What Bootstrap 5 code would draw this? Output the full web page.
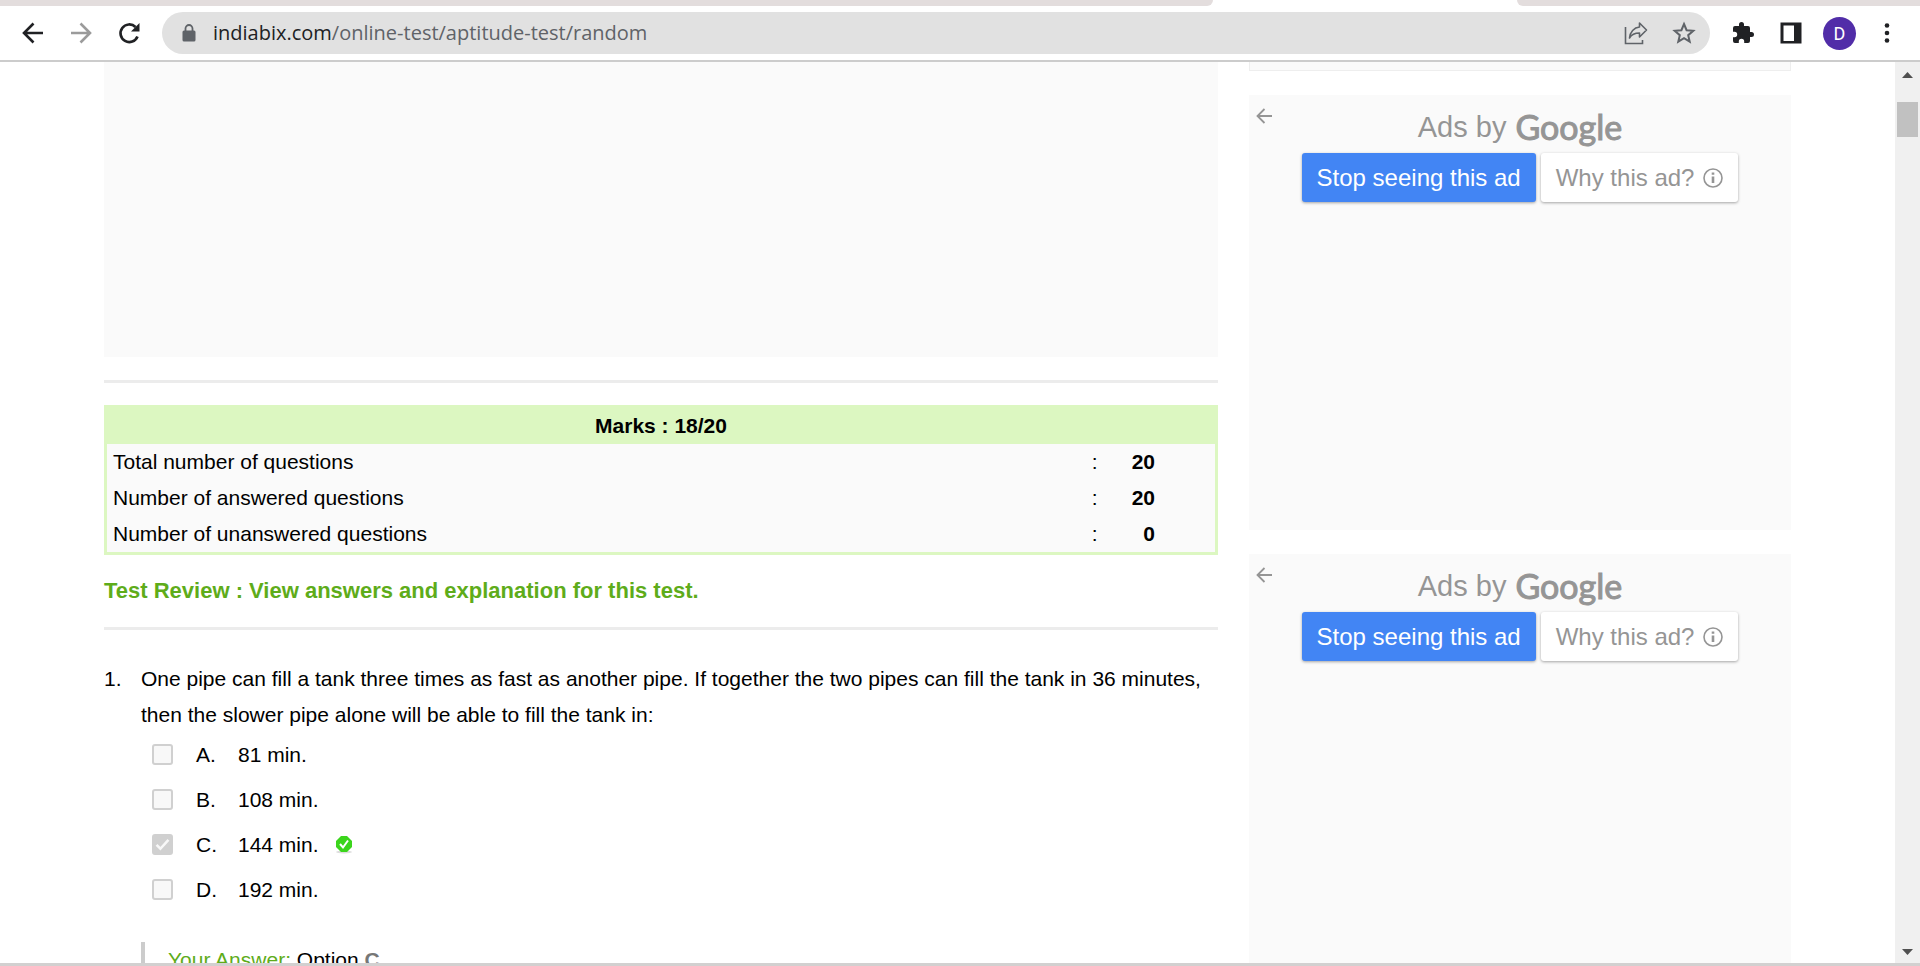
<!DOCTYPE html>
<html lang="en">
<head>
<meta charset="utf-8">
<meta name="viewport" content="width=device-width, initial-scale=1">
<title>Aptitude Test - Random</title>
<link href="https://cdn.jsdelivr.net/npm/bootstrap@5.3.0/dist/css/bootstrap.min.css" rel="stylesheet">
<style>
body { font-family: "Liberation Sans", Arial, sans-serif; font-size: 21px; line-height: 36px; color: #000; background: #fff; }
.tabstrip { height: 6px; }
.tabstrip div { background: #e3dddd; }
.tab-before { width: 63.2%; border-bottom-right-radius: 6px; }
.tab-after { width: 21%; border-bottom-left-radius: 6px; }
.toolbar { height: 56px; border-bottom: 2px solid #ccc; padding: 0 30px 0 18px; }
.icon-btn { border: 0; background: none; padding: 0; line-height: 0; }
.nav-icons { width: 144px; gap: 18px; }
.omnibox { height: 42px; border-radius: 21px; background: #e1e1e1; padding: 0 14px 0 20px; }
.url-field { font: 20px/42px "Open Sans", sans-serif; color: #5f6368; text-decoration: none; padding-left: 17px; }
.url-field b { font-weight: 400; color: #202124; }
.tool-icons { gap: 20px; padding-left: 21px; }
.avatar { width: 33px; height: 33px; background: #512da8; color: #fff; font: 18px/33px Roboto, sans-serif; }
.viewport { height: calc(100vh - 65px); }
.page-area { padding: 0 104px; gap: 31px; }
.main-col { flex: 1114 1 0; min-width: 0; }
.side-col { flex: 542 1 0; min-width: 0; }
.ad-main { height: 295px; background: #fafafa; }
.rule { margin: 23px 0 22px; border-top: 3px solid #ececec; }
.score { border: 3px solid #dcf7c1; background: #fafafa; width: 100%; }
.score th[colspan] { background: #dcf7c1; text-align: center; }
.score td, .score th { padding: 0 6px; }
.score .c-colon { width: 40px; }
.score .c-num { width: 80px; padding-right: 60px; text-align: right; font-weight: 700; }
.review { font-size: 22px; line-height: 36px; font-weight: 700; color: #5eac1a; margin: 18px 0; }
.question { padding-top: 31px; }
.q-num { width: 37px; flex: none; }
.opt { height: 45px; }
.opts { margin-top: -1px; }
.opt .form-check-input { width: 21px; height: 21px; margin: 0 23px 0 11px; border: 2px solid #d0d0d0; border-radius: 3px; background-color: #f8f8f8; opacity: 1; flex: none; }
.opt .form-check-input:checked { background-color: #d0d0d0; background-image: url("data:image/svg+xml,%3csvg xmlns='http://www.w3.org/2000/svg' viewBox='0 0 20 20'%3e%3cpath fill='none' stroke='%23f8f8f8' stroke-width='3' d='M3 10.500l4.500 4.500L17 4.500'/%3e%3c/svg%3e"); }
.opt .form-check-input:disabled ~ label { opacity: 1; }
.opt-letter { width: 42px; display: inline-block; }
.answer { border-left: 4px solid #ccc; padding-left: 23px; margin-top: 30px; }
.answer span { color: #5eac1a; }
.answer b { color: #777; }
.ad-top { height: 9px; background: #fafafa; border: 1px solid #eee; border-top: 0; }
.ad-box { height: 435px; margin-top: 24px; background: #fafafa; color: #959595; }
.ad-back { left: 7px; top: 13px; }
.ad-title { font-size: 29px; line-height: 36px; padding-top: 14px; gap: 9px; }
.glogo { font: 400 34px/36px Lato, sans-serif; -webkit-text-stroke: 1px #959595; }
.ad-actions { gap: 5px; margin-top: 8px; }
.ad-btn { height: 49px; border: 0; border-radius: 3px; font-size: 24px; line-height: 48px; padding: 0 15px; box-shadow: 0 1px 3px rgba(0,0,0,.35); }
.ad-stop { background: #4285f4; color: #fff; }
.ad-why { background: #fff; color: #959595; gap: 9px; }
.scroller { width: 25px; background: #f0f0f0; }
.thumb { height: 35px; background: #c1c1c1; margin: 24px 2px 0; }
.base-edge { height: 3px; background: #d2d0d0; }
</style>
</head>
<body class="overflow-hidden">
<header>
  <div class="tabstrip d-flex justify-content-between"><div class="tab-before"></div><div class="tab-after"></div></div>
  <div class="toolbar d-flex align-items-center">
    <nav class="nav-icons d-flex align-items-center flex-shrink-0">
      <button class="icon-btn" aria-label="Back"><svg width="30" height="30" viewBox="0 0 30 30" fill="none" stroke="#202124" stroke-width="2.6"><path d="M25 15H7M15.500 5.500L6 15l9.500 9.500"/></svg></button>
      <button class="icon-btn" aria-label="Forward"><svg width="30" height="30" viewBox="0 0 30 30" fill="none" stroke="#9b9b9b" stroke-width="2.600"><path d="M5 15h18M14.500 5.500L24 15l-9.500 9.500"/></svg></button>
      <button class="icon-btn" aria-label="Reload"><svg width="30" height="30" viewBox="0 0 30 30"><path d="M23.500 18.500A8.800 8.800 0 1 1 21.500 9" fill="none" stroke="#202124" stroke-width="2.700"/><path d="M25.500 5v8.500H17z" fill="#202124"/></svg></button>
    </nav>
    <div class="omnibox flex-grow-1 d-flex align-items-center">
      <svg width="14" height="18" viewBox="0 0 14 18"><rect y="6.500" x=".5" width="13" height="11" rx="1.500" fill="#5f6368"/><path d="M3.500 7V4.500a3.500 3.500 0 0 1 7 0V7" fill="none" stroke="#5f6368" stroke-width="1.800"/></svg>
      <a class="url-field me-auto" href="#"><b>indiabix.com</b>/online-test/aptitude-test/random</a>
      <button class="icon-btn me-4" aria-label="Share"><svg width="24" height="24" viewBox="0 0 24 24" fill="none" stroke="#5f6368" stroke-width="1.600"><path d="M1.500 6v16.500H18.500V19"/><path d="M15.500 2L22.500 9l-7 7v-4C11 12 7.500 13.500 5.500 17 6 11 10 6.500 15.500 6z" stroke-linejoin="round"/></svg></button>
      <button class="icon-btn" aria-label="Bookmark"><svg width="24" height="24" viewBox="0 0 24 24" fill="none" stroke="#5f6368" stroke-width="2"><path d="M12 3l2.600 6.200 6.700.6-5.100 4.400 1.500 6.500L12 17.200l-5.700 3.500 1.500-6.500-5.100-4.400 6.700-.6z"/></svg></button>
    </div>
    <div class="tool-icons d-flex align-items-center flex-shrink-0">
      <button class="icon-btn me-1" aria-label="Extensions"><svg width="24" height="24" viewBox="0 0 24 24"><path d="M20.500 11H19V7a2 2 0 0 0-2-2h-4V3.500a2.500 2.500 0 0 0-5 0V5H4a2 2 0 0 0-2 2v3.800h1.500a2.700 2.700 0 0 1 0 5.400H2V20a2 2 0 0 0 2 2h3.800v-1.500a2.700 2.700 0 0 1 5.400 0V22H17a2 2 0 0 0 2-2v-4h1.500a2.500 2.500 0 0 0 0-5z" fill="#202124"/></svg></button>
      <button class="icon-btn" aria-label="Side panel"><svg width="24" height="24" viewBox="0 0 24 24"><path d="M1.500 1.500h21v21h-21zM4.500 4.500v15.500H15V4.500z" fill="#202124" fill-rule="evenodd"/></svg></button>
      <button class="icon-btn avatar rounded-circle me-2" aria-label="Profile">D</button>
      <button class="icon-btn" aria-label="Menu"><svg width="6" height="24" viewBox="0 0 6 24" fill="#202124"><circle cx="3" cy="4.500" r="2.300"/><circle cx="3" cy="12" r="2.300"/><circle cx="3" cy="19.500" r="2.300"/></svg></button>
    </div>
  </div>
</header>
<div class="viewport d-flex overflow-hidden">
  <div class="page-area d-flex flex-grow-1 align-items-start">
    <main class="main-col">
      <div class="ad-main"></div>
      <div class="rule"></div>
      <table class="score">
        <thead><tr><th colspan="3">Marks : 18/20</th></tr></thead>
        <tbody>
          <tr><td>Total number of questions</td><td class="c-colon">:</td><td class="c-num">20</td></tr>
          <tr><td>Number of answered questions</td><td class="c-colon">:</td><td class="c-num">20</td></tr>
          <tr><td>Number of unanswered questions</td><td class="c-colon">:</td><td class="c-num">0</td></tr>
        </tbody>
      </table>
      <h2 class="review">Test Review : View answers and explanation for this test.</h2>
      <div class="rule my-0"></div>
      <section class="question d-flex">
        <div class="q-num">1.</div>
        <div class="flex-grow-1">
          <p class="mb-0">One pipe can fill a tank three times as fast as another pipe. If together the two pipes can fill the tank in 36 minutes, then the slower pipe alone will be able to fill the tank in:</p>
          <div class="opts">
            <div class="opt d-flex align-items-center"><input class="form-check-input" type="checkbox" id="oa" disabled><label for="oa"><span class="opt-letter">A.</span>81 min.</label></div>
            <div class="opt d-flex align-items-center"><input class="form-check-input" type="checkbox" id="ob" disabled><label for="ob"><span class="opt-letter">B.</span>108 min.</label></div>
            <div class="opt d-flex align-items-center"><input class="form-check-input" type="checkbox" id="oc" checked disabled><label for="oc"><span class="opt-letter">C.</span>144 min.</label>
              <svg class="ms-3" width="18" height="19" viewBox="0 0 18 19"><ellipse cx="9" cy="17" rx="8" ry="1.500" fill="#ddd"/><path d="M6 1h6l5 5v6l-5 5H6l-5-5V6z" fill="#3bd51c"/><path d="M5 9l3 3.500L13 5.500" fill="none" stroke="#fff" stroke-width="2"/></svg></div>
            <div class="opt d-flex align-items-center"><input class="form-check-input" type="checkbox" id="od" disabled><label for="od"><span class="opt-letter">D.</span>192 min.</label></div>
          </div>
          <div class="answer"><span>Your Answer:</span> Option <b>C</b></div>
        </div>
      </section>
    </main>
    <aside class="side-col">
      <div class="ad-top"></div>
      <div class="ad-box position-relative">
        <button class="icon-btn ad-back position-absolute" aria-label="Back"><svg width="16" height="16" viewBox="0 0 16 16" fill="none" stroke="#959595" stroke-width="1.800"><path d="M16 8H1.500M8.500 1L1.500 8l7 7"/></svg></button>
        <div class="ad-title d-flex justify-content-center"><span>Ads by</span><span class="glogo">Google</span></div>
        <div class="ad-actions d-flex justify-content-center"><button class="ad-btn ad-stop">Stop seeing this ad</button><button class="ad-btn ad-why d-flex align-items-center">Why this ad? <svg width="20" height="20" viewBox="0 0 20 20" fill="none" stroke="#959595" stroke-width="1.600"><circle cx="10" cy="10" r="9"/><path d="M10 8.500V15M10 4.500v2.200" stroke-width="2.600"/></svg></button></div>
      </div>
      <div class="ad-box position-relative">
        <button class="icon-btn ad-back position-absolute" aria-label="Back"><svg width="16" height="16" viewBox="0 0 16 16" fill="none" stroke="#959595" stroke-width="1.800"><path d="M16 8H1.500M8.500 1L1.500 8l7 7"/></svg></button>
        <div class="ad-title d-flex justify-content-center"><span>Ads by</span><span class="glogo">Google</span></div>
        <div class="ad-actions d-flex justify-content-center"><button class="ad-btn ad-stop">Stop seeing this ad</button><button class="ad-btn ad-why d-flex align-items-center">Why this ad? <svg width="20" height="20" viewBox="0 0 20 20" fill="none" stroke="#959595" stroke-width="1.600"><circle cx="10" cy="10" r="9"/><path d="M10 8.500V15M10 4.500v2.200" stroke-width="2.600"/></svg></button></div>
      </div>
    </aside>
  </div>
  <div class="scroller d-flex flex-column align-items-stretch flex-shrink-0">
    <svg class="mx-auto mt-2" width="11" height="8" viewBox="0 0 11 8"><path d="M0 8L5.500 2 11 8z" fill="#505050"/></svg>
    <div class="thumb"></div>
    <svg class="mx-auto mt-auto mb-2" width="11" height="6" viewBox="0 0 11 6"><path d="M0 0h11L5.500 6z" fill="#505050"/></svg>
  </div>
</div>
<div class="base-edge"></div>
<script src="https://cdn.jsdelivr.net/npm/bootstrap@5.3.0/dist/js/bootstrap.bundle.min.js"></script>
</body>
</html>
